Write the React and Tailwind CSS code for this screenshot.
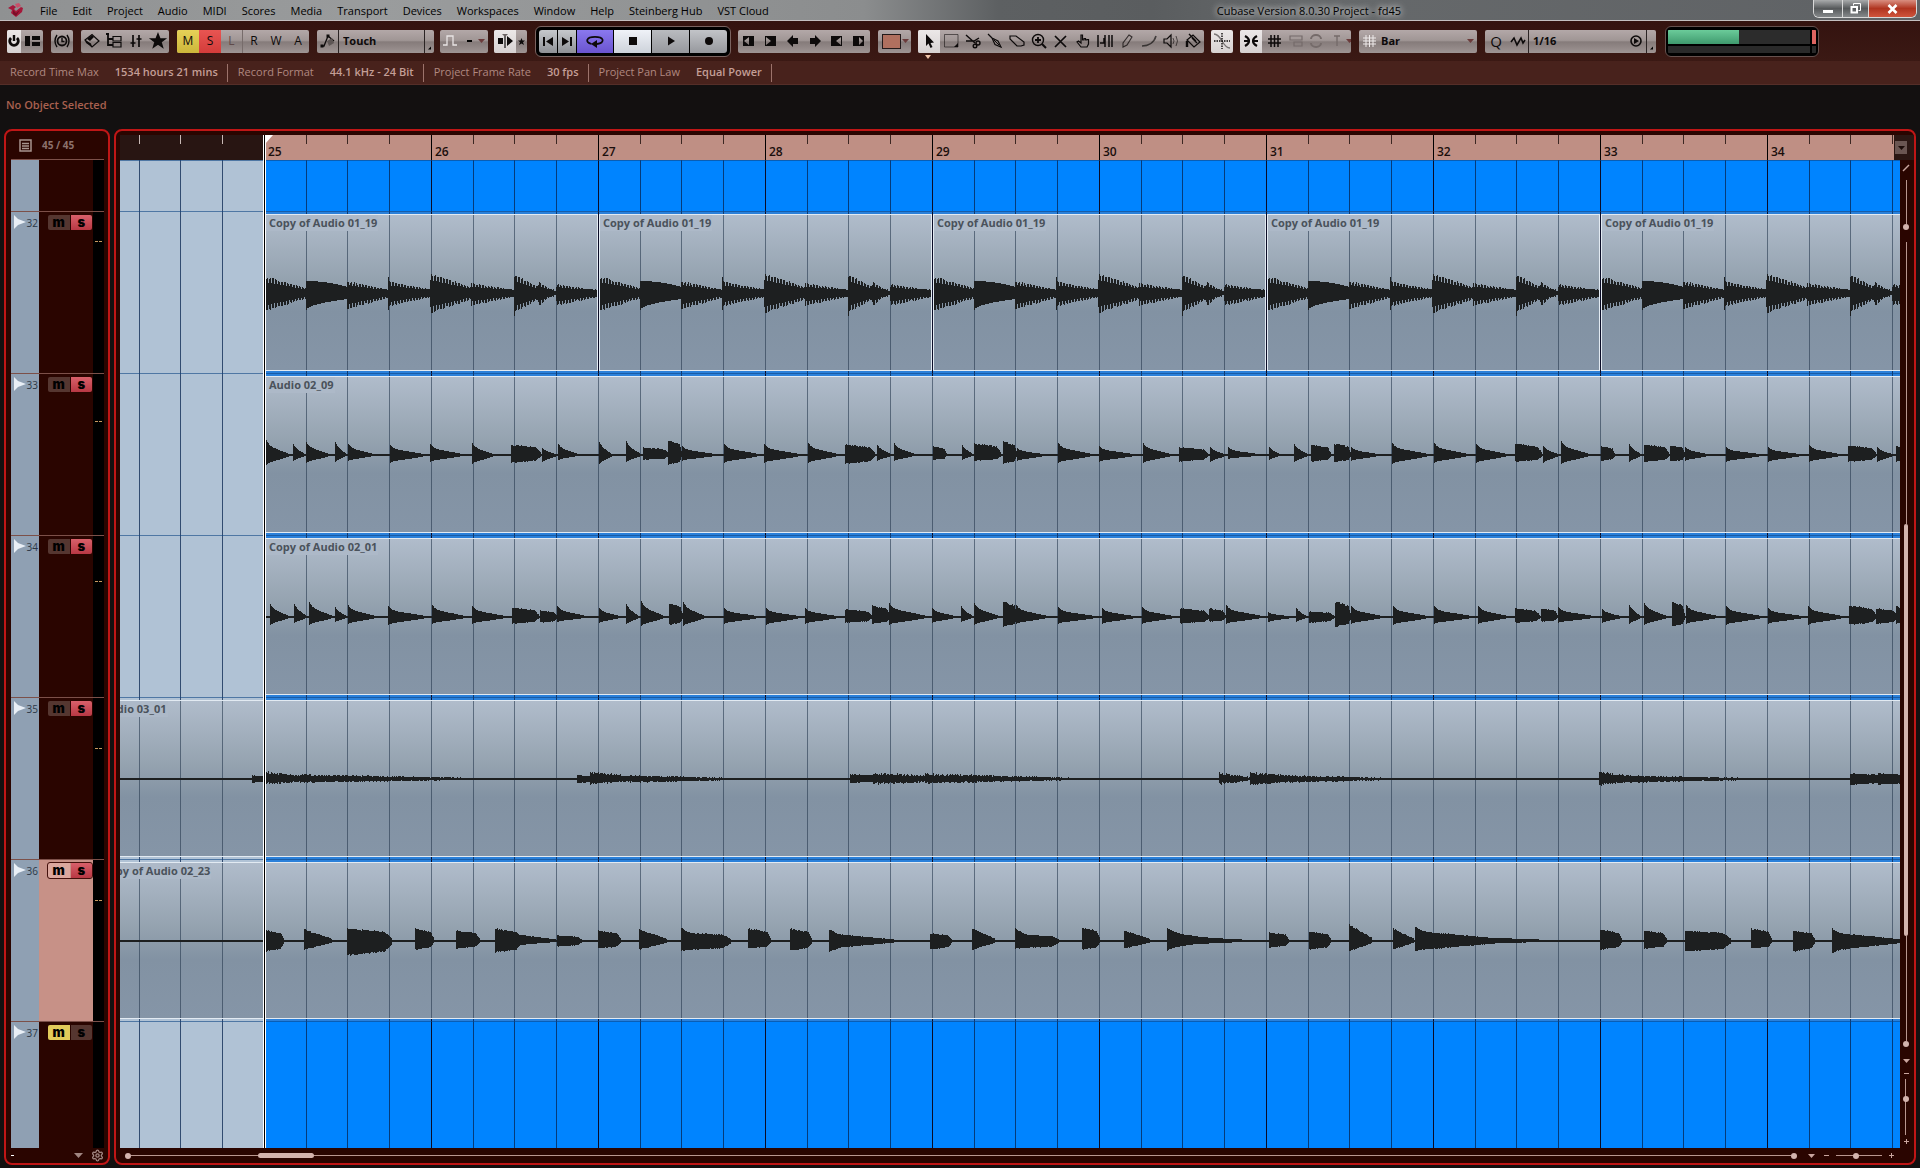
import React, { useMemo, useState } from "react";
import { Settings } from "lucide-react";

const MENUS = [
  "File", "Edit", "Project", "Audio", "MIDI", "Scores", "Media", "Transport",
  "Devices", "Workspaces", "Window", "Help", "Steinberg Hub", "VST Cloud",
];

const INFO = [
  ["Record Time Max", "1534 hours 21 mins"],
  ["Record Format", "44.1 kHz - 24 Bit"],
  ["Project Frame Rate", "30 fps"],
  ["Project Pan Law", "Equal Power"],
];

const BEAT = 41.75;
const FIRST_BEAT = 19;
const LOCATOR = 145;
const LANE_CENTER = 78;
const WAVE_WIDTH = 1780;

const BEATS = Array.from({ length: 43 }, (_, k) => ({
  x: Math.floor(FIRST_BEAT + BEAT * k),
  bar: k % 4 === 3 ? 25 + (k - 3) / 4 : null,
}));

// Hits are [start, end, peak up, peak down, shape].
// p = pluck, b = sustained block, r = ramp down, t = block with a long tail,
// c = comb, s = smooth, n = noise
const LOOP = [
  [0, 40, 17, 19, "c"], [41, 82, 12, 17, "s"], [82, 122, 12, 17, "c"],
  [123, 164, 12, 14, "c"], [123, 126, 17, 17, "r"], [165, 206, 20, 21, "c"], [206, 248, 10, 13, "c"],
  [249, 274, 19, 20, "c"], [249, 254, 17, 23, "r"], [273, 284, 12, 14, "c"], [284, 291, 5, 5, "c"],
  [291, 332, 9, 13, "c"],
];

const KEYS = [
  [266, 291, 15, 10], [293, 306, 11, 6], [306, 332, 13, 8], [335, 347, 13, 7],
  [348, 377, 11, 6], [390, 429, 10, 8], [430, 466, 11, 7], [472, 496, 12, 9],
  [511, 540, 11, 8, "b"], [542, 558, 7, 7], [558, 581, 11, 5], [599, 613, 13, 9],
  [626, 642, 14, 7], [643, 668, 8, 5, "b"], [668, 681, 15, 10, "b"], [682, 720, 9, 6],
  [724, 763, 11, 8], [764, 804, 11, 8], [808, 841, 12, 8], [845, 874, 11, 9, "b"],
  [877, 893, 10, 6], [894, 917, 12, 6], [933, 946, 9, 5, "b"], [962, 974, 10, 5],
  [974, 1000, 12, 6, "b"], [1003, 1016, 14, 9, "b"], [1017, 1049, 7, 6], [1058, 1096, 12, 8],
  [1099, 1139, 9, 7], [1143, 1174, 12, 8], [1179, 1207, 8, 7, "b"], [1210, 1227, 8, 7],
  [1228, 1264, 8, 4], [1269, 1281, 8, 5], [1294, 1309, 11, 7], [1311, 1330, 11, 7, "b"],
  [1334, 1350, 12, 7, "b"], [1351, 1383, 8, 6], [1392, 1432, 12, 9], [1434, 1472, 12, 8],
  [1476, 1511, 11, 8], [1515, 1541, 12, 7, "b"], [1543, 1560, 9, 8], [1561, 1592, 14, 9],
  [1601, 1614, 9, 6, "b"], [1629, 1642, 11, 7], [1644, 1668, 11, 7, "b"], [1670, 1684, 10, 7, "b"],
  [1685, 1712, 8, 6], [1726, 1766, 8, 7], [1768, 1805, 8, 7], [1809, 1844, 10, 7],
  [1848, 1875, 10, 7, "b"], [1877, 1895, 8, 7], [1896, 1902, 10, 7, "b"],
];

const KEYS_COPY = [
  [270, 291, 13, 8], [294, 308, 13, 6], [309, 335, 15, 8], [335, 348, 10, 5],
  [348, 379, 12, 7], [388, 430, 11, 8], [432, 469, 12, 7], [472, 509, 11, 7],
  [512, 538, 10, 7, "b"], [540, 556, 7, 6, "b"], [557, 590, 11, 5], [599, 623, 9, 6],
  [626, 640, 13, 7], [641, 666, 16, 9], [669, 682, 14, 8, "b"], [683, 707, 15, 9],
  [724, 763, 9, 7], [766, 804, 9, 8], [805, 842, 9, 7], [845, 871, 8, 6, "b"],
  [872, 889, 12, 7, "b"], [889, 930, 14, 8], [932, 959, 9, 6], [961, 974, 11, 5],
  [974, 1001, 14, 8], [1003, 1016, 16, 10, "b"], [1016, 1051, 12, 7], [1058, 1100, 10, 7],
  [1102, 1139, 9, 7], [1142, 1178, 10, 7], [1180, 1208, 9, 7, "b"], [1209, 1225, 9, 5, "b"],
  [1226, 1266, 12, 7], [1268, 1296, 5, 5], [1296, 1308, 9, 5], [1309, 1333, 6, 6, "b"],
  [1335, 1350, 16, 10, "b"], [1351, 1386, 11, 7], [1393, 1432, 11, 8], [1434, 1476, 11, 7],
  [1478, 1512, 11, 7], [1515, 1539, 9, 6, "b"], [1541, 1557, 9, 5, "b"], [1558, 1599, 10, 6],
  [1602, 1624, 8, 6], [1629, 1642, 12, 7], [1644, 1669, 14, 8], [1672, 1684, 16, 10, "b"],
  [1686, 1721, 12, 7], [1726, 1766, 11, 8], [1768, 1808, 9, 7], [1808, 1847, 11, 8],
  [1849, 1875, 12, 8, "b"], [1876, 1896, 9, 7, "b"], [1896, 1902, 12, 7, "b"],
];

const PAD = [
  [252, 266, 4, 4, "b"], [264, 320, 8, 6, "n"], [300, 480, 5, 4, "n"], [577, 600, 4, 4, "b"],
  [590, 650, 8, 6, "n"], [630, 745, 4, 4, "n"], [850, 884, 5, 4, "b"], [873, 970, 7, 6, "n"],
  [925, 1075, 6, 5, "n"], [1219, 1252, 7, 6, "n"], [1250, 1310, 8, 7, "n"], [1290, 1400, 4, 4, "n"],
  [1599, 1645, 8, 7, "n"], [1630, 1760, 4, 4, "n"], [1850, 1882, 6, 6, "b"], [1878, 1910, 6, 6, "b"],
];

const BASS = [
  [266, 283, 11, 11, "b"], [304, 331, 12, 9, "r"], [347, 391, 13, 15, "b"], [415, 433, 13, 9, "b"],
  [456, 479, 11, 8, "b"], [495, 520, 13, 12, "b"], [510, 555, 8, 5, "r"], [557, 581, 6, 6, "b"],
  [598, 620, 11, 8, "b"], [639, 666, 12, 9, "r"], [681, 730, 14, 11, "t"], [681, 730, 9, 10, "b"],
  [748, 770, 13, 8, "b"], [790, 811, 13, 10, "b"], [829, 893, 12, 12, "t"], [829, 893, 8, 8, "r"],
  [930, 951, 8, 9, "b"], [972, 994, 13, 9, "r"], [1015, 1058, 13, 8, "t"], [1015, 1058, 7, 8, "b"],
  [1082, 1099, 14, 9, "b"], [1124, 1149, 11, 8, "r"], [1167, 1252, 14, 10, "t"], [1269, 1288, 9, 7, "b"],
  [1309, 1330, 10, 9, "b"], [1349, 1371, 17, 11, "r"], [1393, 1413, 13, 9, "r"], [1415, 1555, 15, 11, "t"],
  [1415, 1500, 11, 10, "r"], [1600, 1621, 12, 9, "b"], [1644, 1666, 11, 8, "b"], [1685, 1730, 11, 11, "b"],
  [1751, 1771, 13, 8, "b"], [1793, 1814, 11, 11, "b"], [1832, 1915, 13, 13, "t"], [1832, 1900, 9, 10, "r"],
];

const inArrange = (hits) => hits.map(([a, b, ...rest]) => [a - 120, b - 120, ...rest]);

const TRACKS = [
  {
    id: 32,
    solo: true,
    peak: 30,
    clips: [0, 1, 2, 3, 4].map((i) => ({ name: "Copy of Audio 01_19", start: LOCATOR + 334 * i, width: 333, hits: LOOP })),
  },
  { id: 33, solo: true, peak: 48, clips: [{ name: "Audio 02_09", start: LOCATOR, hits: inArrange(KEYS) }] },
  { id: 34, solo: true, peak: 46, clips: [{ name: "Copy of Audio 02_01", start: LOCATOR, hits: inArrange(KEYS_COPY) }] },
  { id: 35, solo: true, peak: 51, clips: [{ name: "Audio 03_01", start: -22, hits: inArrange(PAD) }] },
  { id: 36, solo: true, peak: 41, selected: true, clips: [{ name: "Copy of Audio 02_23", start: -22, hits: inArrange(BASS) }] },
];

function noise(n) {
  const v = Math.sin(n * 12.9898) * 43758.5453;
  return v - Math.floor(v);
}

function amplitude(shape, t, d, peak, x, side) {
  const j = noise(x * 2 + side);
  switch (shape) {
    case "b":
      return peak * (1 - 0.3 * t) * (t > 0.85 ? 1 - (t - 0.85) * 4 : 1) * (0.88 + 0.12 * j);
    case "r":
      return peak * (1 - 0.78 * t) * (0.88 + 0.12 * j);
    case "t":
      return peak * (0.42 * (1 - 0.85 * t) + 0.58 * Math.exp(-d / 12)) * (0.9 + 0.1 * j);
    case "s":
      return side ? peak * (1 - 0.65 * Math.sqrt(t)) : peak * (1 - 0.5 * t * t);
    case "c": {
      const env = peak * (1 - 0.68 * t);
      return x % 3 === 0 ? Math.max(4, env * 0.65) : env * (0.85 + 0.15 * j);
    }
    case "n":
      return peak * (1 - 0.75 * t) * (0.6 + 0.4 * j);
    default:
      return side
        ? peak * (0.82 * (1 - t) ** 0.8 + 0.18 * Math.exp(-d / 2))
        : peak * (0.62 * (1 - t) ** 0.9 + 0.38 * Math.exp(-d / 3));
  }
}

function wavePath(hits, from, to) {
  const up = [];
  const down = [];
  for (let x = from; x < to; x++) {
    let a = 1;
    let b = 1;
    hits.forEach(([x0, x1, pu, pd, shape = "p"]) => {
      if (x < x0 || x > x1) return;
      const t = (x - x0) / (x1 - x0);
      a = Math.max(a, amplitude(shape, t, x - x0, pu, x, 0));
      b = Math.max(b, amplitude(shape, t, x - x0, pd, x, 1));
    });
    up.push(`L${x} ${LANE_CENTER - Math.round(a)}H${x + 1}`);
    down.push(`L${x + 1} ${LANE_CENTER + Math.round(b)}H${x}`);
  }
  return `M${from} ${LANE_CENTER}${up.join("")}${down.reverse().join("")}Z`;
}

function GridLines({ beatClass, barClass }) {
  return (
    <svg className="absolute inset-0 h-full w-full" shapeRendering="crispEdges" aria-hidden="true">
      {BEATS.map(({ x, bar }) => (
        <rect key={x} x={x} y="0" width="1" height="100%" className={bar ? barClass : beatClass} />
      ))}
    </svg>
  );
}

function Clip({ clip }) {
  const path = useMemo(
    () => wavePath(clip.hits, clip.width ? 0 : Math.max(clip.start, 0), clip.width || WAVE_WIDTH),
    [clip]
  );
  const shift = clip.width ? 0 : -clip.start;

  return (
    <div
      className="absolute top-[3px] h-[157px] overflow-hidden border-y border-l border-[#e2eaf2] bg-[linear-gradient(#b0bccb,#94a2af_42%,#8292a3_62%,#8595a7)]"
      style={{ left: clip.start, width: clip.width, right: clip.width ? undefined : 0, borderRightWidth: clip.width ? 1 : 0 }}
    >
      <svg className="absolute top-0 h-full" style={{ left: shift - 1, width: WAVE_WIDTH }} aria-hidden="true">
        <g shapeRendering="crispEdges">
          {BEATS.map(({ x }) => {
            const at = clip.width ? x - clip.start : x;
            return <rect key={x} x={at} y="0" width="1" height="100%" className="fill-[#26394e]/60" />;
          })}
        </g>
        <path d={path} className="fill-[#1d1f20]" />
      </svg>
      <span className="relative block w-fit bg-[#adb9c8] pr-px pl-[3px] text-[11px] leading-4 font-bold text-[#4a525b]">
        {clip.name}
      </span>
    </div>
  );
}

function Lane({ track, className }) {
  return (
    <div
      className={`relative overflow-hidden ${
        track
          ? "bg-[linear-gradient(90deg,#b0c2d5_145px,#2a80da_145px)]"
          : "bg-[linear-gradient(90deg,#b0c2d5_145px,#0084ff_145px)]"
      } ${className}`}
    >
      <GridLines beatClass="fill-[#07234d]/75" barClass="fill-[#0a0c26]" />
      <div className="absolute inset-x-0 top-0 h-px bg-[#0f4484]/60" />
      {track?.clips.map((clip) => <Clip key={clip.start} clip={clip} />)}
    </div>
  );
}

function TrackHeader({ id, mute, solo, selected, peak, className }) {
  return (
    <div className={`flex border-t border-[#7c5049] ${className}`}>
      <div className="flex w-7 justify-between bg-[#8fa0b3] pt-[3px] pr-px pl-[3px]">
        <svg width="12" height="14" viewBox="0 0 12 14" className="shrink-0 fill-[#e9eff6]" aria-hidden="true">
          <path d="M0 0L4 4L12 7L4 10L0 14Z" />
        </svg>
        <span className="text-[10px] leading-4 text-[#2c3846]">{id}</span>
      </div>
      <div className={`flex-1 pt-[3px] pl-[9px] ${selected ? "bg-[#c79187]" : "bg-[#2a0500]"}`}>
        <div className={`flex w-[44px] gap-px rounded-xs ${selected ? "outline outline-[#43100c]" : ""}`}>
          <button
            type="button"
            aria-label={`Mute track ${id}`}
            className={`h-[15px] flex-1 rounded-l-xs font-[Inter] text-[13px] leading-[13px] font-black text-black ${
              mute ? "bg-[#e2cb5a]" : selected ? "bg-[#dba79e]" : "bg-[#553630]"
            }`}
          >
            m
          </button>
          <button
            type="button"
            aria-label={`Solo track ${id}`}
            className={`h-[15px] flex-1 rounded-r-xs font-[Inter] text-[13px] leading-[13px] font-black text-black ${
              solo ? "bg-[linear-gradient(#d8606a,#b83844)]" : "bg-[#553630]"
            }`}
          >
            s
          </button>
        </div>
      </div>
      <div className="w-[11px] bg-black">
        {peak && (
          <div className="flex justify-center gap-px" style={{ paddingTop: peak - 1 }}>
            <span className="h-px w-[3px] bg-[#c99a60]" />
            <span className="h-px w-[3px] bg-[#c99a60]" />
          </div>
        )}
      </div>
    </div>
  );
}

function Ico({ children, className = "" }) {
  return (
    <svg
      viewBox="0 0 20 20"
      className={`h-5 w-5 shrink-0 ${className}`}
      fill="none"
      stroke="currentColor"
      strokeWidth="1.4"
      aria-hidden="true"
    >
      {children}
    </svg>
  );
}

const FACE = "bg-[linear-gradient(#b3a8a8,#a09695_45%,#857b7a_52%,#9f9594)]";
const FACE_LIT = "bg-[linear-gradient(#ece8e8,#d6d1d1)]";

function Group({ children, className = "" }) {
  return <div className={`flex h-[23px] shrink-0 overflow-hidden rounded-xs ${FACE} ${className}`}>{children}</div>;
}

function Tool({ label, lit, width = "w-[22px]", className = "", children }) {
  return (
    <button
      type="button"
      aria-label={label}
      className={`flex h-full shrink-0 items-center justify-center text-[#0d0a0a] ${width} ${lit ? FACE_LIT : ""} ${className}`}
    >
      {children}
    </button>
  );
}

function Drop({ label, value, className = "" }) {
  return (
    <select
      aria-label={label}
      defaultValue={value}
      className={`h-full min-w-0 flex-1 appearance-none bg-transparent pl-1 text-[11px] font-bold text-[#0d0a0a] outline-none ${className}`}
    >
      <option>{value}</option>
    </select>
  );
}

function Caret({ className = "text-[#6b3b3b]" }) {
  return (
    <svg width="7" height="4" viewBox="0 0 7 4" className={`shrink-0 fill-current ${className}`} aria-hidden="true">
      <path d="M0 0H7L3.500 4Z" />
    </svg>
  );
}

function Corner() {
  return (
    <div className="flex w-[10px] items-end justify-end border-l border-[#2b2424] p-[3px]">
      <svg width="4" height="4" viewBox="0 0 4 4" aria-hidden="true"><path d="M4 0V4H0Z" /></svg>
    </div>
  );
}

function TitleBar() {
  return (
    <header className="flex h-[21px] items-center border-b border-[#c4c0c0] bg-[linear-gradient(90deg,#8f9192,#9a9c9d_20%,#8b8d8e_45%,#5d6062_52%,#5a5d5f_60%,#66696b_68%,#5f6265)]">
      <svg width="18" height="16" viewBox="0 0 18 16" className="ml-[7px]" aria-hidden="true">
        <path d="M1 6L6 3L9 5L7 7L9 9L14 5L16 6L15 10L9 15L4 11L5 8Z" fill="#a5183a" />
        <path d="M8 2L12 1L14 4L10 6Z" fill="#c8506a" />
        <path d="M6 8L9 11L13 8L9 14L6 12Z" fill="#7a0f28" />
      </svg>
      <nav className="flex gap-[15px] pt-px pl-[15px] text-[11px] leading-4 text-black [text-shadow:0_0_5px_#ffffffaa]">
        {MENUS.map((m) => (
          <button key={m} type="button">{m}</button>
        ))}
      </nav>
      <h1 className="flex-1 pt-px pl-9 text-center text-[11px] leading-4 text-black [text-shadow:0_0_6px_#fff,0_0_8px_#ffffff99]">
        Cubase Version 8.0.30 Project - fd45
      </h1>
      <div className="mr-[3px] flex h-[18px] self-start overflow-hidden rounded-b-md border border-t-0 border-[#d9d9d9] text-white">
        <button type="button" aria-label="Minimize" className="flex w-7 items-end justify-center bg-[linear-gradient(#a9abac,#56595b_50%,#85888a)] pb-1">
          <span className="h-[3px] w-[10px] bg-white" />
        </button>
        <button type="button" aria-label="Restore" className="flex w-[27px] items-center justify-center border-x border-[#d9d9d9] bg-[linear-gradient(#a9abac,#56595b_50%,#85888a)]">
          <svg width="11" height="11" viewBox="0 0 11 11" fill="none" stroke="currentColor" aria-hidden="true">
            <path d="M3.500 2.500V.5H10.500V7.500H8.500" />
            <path d="M1.500 4H7V9.500H1.500Z" strokeWidth="2" />
          </svg>
        </button>
        <button type="button" aria-label="Close" className="flex w-[47px] items-center justify-center bg-[linear-gradient(#d98e80,#b03420_50%,#d0543c)]">
          <svg width="11" height="10" viewBox="0 0 11 10" stroke="currentColor" strokeWidth="2.600" aria-hidden="true">
            <path d="M1.500 1L9.500 9M9.500 1L1.500 9" />
          </svg>
        </button>
      </div>
    </header>
  );
}

const AUTOMATION = [
  ["M", "bg-[linear-gradient(#e6d158,#cdb63a)]"],
  ["S", "bg-[linear-gradient(#e85552,#d33c3a)]"],
  ["L", "text-[#5f4a4a] border-r border-r-[#776c6b]"],
  ["R", ""],
  ["W", ""],
  ["A", ""],
];

function Transport() {
  return (
    <div className="ml-2 rounded-md border border-[#7a6360] bg-black p-[2px]">
      <div className="flex h-[25px] gap-px overflow-hidden rounded-sm border border-black text-[#23272b]">
        <Tool label="Previous marker" width="w-[18px]" className="bg-[linear-gradient(#c6c8cc,#8f9196)]">
          <svg width="10" height="9" viewBox="0 0 10 9" className="fill-current" aria-hidden="true"><path d="M0 0H2V9H0ZM10 0V9L3 4.500Z" /></svg>
        </Tool>
        <Tool label="Next marker" width="w-[18px]" className="bg-[linear-gradient(#c6c8cc,#8f9196)]">
          <svg width="10" height="9" viewBox="0 0 10 9" className="fill-current" aria-hidden="true"><path d="M8 0H10V9H8ZM0 0V9L7 4.500Z" /></svg>
        </Tool>
        <Tool label="Cycle" width="w-9" className="bg-[linear-gradient(#8a78ef,#6a54cf)]">
          <Ico>
            <path d="M6.500 13C3 12 1.500 10.500 2.500 8.500C4 5 16 5 17.500 8.500C18.500 11 16 12.500 12 13" strokeWidth="1.800" />
            <path d="M6 13L12 9V17Z" fill="currentColor" stroke="none" />
          </Ico>
        </Tool>
        <Tool label="Stop" width="w-[37px]" className="bg-[linear-gradient(#eff2f8,#cdd2da)]">
          <span className="h-2 w-2 bg-current" />
        </Tool>
        <Tool label="Play" width="w-[37px]" className="bg-[linear-gradient(#b9bbbf,#96989d)]">
          <Ico><path d="M7 5.500V14.500L14 10Z" fill="currentColor" stroke="none" /></Ico>
        </Tool>
        <Tool label="Record" width="w-[37px]" className="bg-[linear-gradient(#c2c4c8,#96989d)]">
          <span className="h-2 w-2 rounded-full bg-current" />
        </Tool>
      </div>
    </div>
  );
}

const NUDGES = [
  ["Trim start left", <path key="a" d="M4 5H15V15H4ZM10 6L5 10L10 14Z" fillRule="evenodd" />],
  ["Trim start right", <path key="b" d="M4 5H15V15H4ZM5 6L10 10L5 14Z" fillRule="evenodd" />],
  ["Move left", <path key="c" d="M4 10L10 4V7H15V13H10V16Z" />],
  ["Move right", <path key="d" d="M16 10L10 4V7H5V13H10V16Z" />],
  ["Trim end left", <path key="e" d="M4 5H15V15H4ZM14 6L9 10L14 14Z" fillRule="evenodd" />],
  ["Trim end right", <path key="f" d="M4 5H15V15H4ZM10 6L14 10L10 14Z" fillRule="evenodd" />],
];

const TOOLS = [
  ["Object selection", <path key="a" d="M7 3V15L9.500 12.500L11.500 17L13.500 16L11.500 12L15 11.500Z" fill="currentColor" stroke="none" />],
  ["Range selection", <g key="b"><path d="M3.500 3.500H17V16H3.500Z" strokeWidth="1" opacity=".55" /><path d="M17 12V16H13Z" fill="currentColor" stroke="none" /></g>],
  ["Split", <g key="c"><path d="M3 4L12 12M3 10H11L16 7" /><circle cx="15" cy="12" r="2" /><circle cx="12" cy="15" r="1.800" /></g>],
  ["Glue", <g key="d"><path d="M3 3L7 7M7 7L13 10L16 16L10 13.500Z" strokeWidth="1.200" /><path d="M9 9L14 14" strokeWidth="1" /></g>],
  ["Erase", <path key="e" d="M3 8L3 5H9L17 11V14L14 15H10Z" strokeWidth="1.200" />],
  ["Zoom", <g key="f"><circle cx="9" cy="9" r="5.500" /><path d="M13 13L17 17" strokeWidth="2" /><path d="M9 6V12M6 9H12" strokeWidth="1.800" /></g>],
  ["Mute", <path key="g" d="M4 5L15 16M15 5L4 16" strokeWidth="1.700" />],
  ["Comp", <path key="h" d="M8 16L4 11L5.500 10L8 12V4H9.500V9H11V7.500H12.500V9H14V8.500H15.500V13L14 16Z" strokeWidth="1.200" />],
  ["Time warp", <path key="i" d="M3 4V16M5 12H9V7M10 16V4M14 4V16M17 4V16" strokeWidth="1.500" />],
  ["Draw", <path key="j" d="M6 16V12L12 4L15 6L10 14Z" strokeWidth="1.100" opacity=".75" />],
  ["Line", <path key="k" d="M3 15C9 15 15 12 17 5" strokeWidth="1.600" opacity=".65" />],
  ["Play", <g key="l"><path d="M3 8H6L10 4V16L6 12H3Z" strokeWidth="1.200" /><path d="M12 7Q14 10 12 13M15 5Q18 10 15 15" strokeWidth="1" opacity=".6" /></g>],
  ["Color", <g key="m"><path d="M4 9L10 4L17 11L11 16Z" strokeWidth="1.200" /><path d="M6 3L13 10M9 7L14 12" /><path d="M4 10V16" strokeWidth="2.400" /></g>],
];

function Toolbar() {
  const [tool, setTool] = useState("Object selection");

  return (
    <div className="flex h-10 items-center bg-[linear-gradient(#34130f,#3b1914)] pl-[7px]">
      <Group>
        <Tool label="Activate project" lit width="w-[14px]">
          <Ico><path d="M7 7A4.300 4.300 0 1 0 13 7" strokeWidth="2.800" /><path d="M10 4V10" strokeWidth="2.400" /></Ico>
        </Tool>
        <Tool label="Window layout">
          <Ico><path d="M3 5H8V15H3ZM10 5H18V9H10ZM10 11H18V15H10Z" fill="currentColor" stroke="none" /></Ico>
        </Tool>
      </Group>
      <Group className="ml-2">
        <Tool label="Constrain delay compensation">
          <Ico>
            <circle cx="10" cy="10" r="4.500" strokeWidth="1.800" />
            <path d="M10 7V10.500H12.500M5 4Q1 10 5 16M15 4Q19 10 15 16" />
          </Ico>
        </Tool>
      </Group>
      <Group className="ml-2">
        <Tool label="Open media pool">
          <Ico><path d="M3 9L10 3.500L17 10L10 16Z" strokeWidth="1.200" /><path d="M3 9L9 12.500L10 16L4 12ZM5 8L10 4L12 6L8 10Z" fill="currentColor" stroke="none" /></Ico>
        </Tool>
        <Tool label="Track list view">
          <Ico><path d="M2 3H5M4 3V14H9M4 8H9" strokeWidth="1.800" /><path d="M9 5.500H17V10H9ZM9 11.500H17V16H9Z" strokeWidth="1.200" /></Ico>
        </Tool>
        <Tool label="Mixer">
          <Ico><path d="M7 4V16M13 4V16M4.500 12H9.500M10.500 8H15.500" strokeWidth="1.700" /></Ico>
        </Tool>
        <Tool label="Favourites">
          <Ico><path d="M10 3L12 8H17L13 11L14.500 16L10 13L5.500 16L7 11L3 8H8Z" fill="currentColor" /></Ico>
        </Tool>
      </Group>
      <Group className="ml-2">
        {AUTOMATION.map(([letter, cls]) => (
          <Tool key={letter} label={letter} className={`text-[12px] ${cls}`}>{letter}</Tool>
        ))}
      </Group>
      <Group className="ml-2 w-[117px]">
        <Tool label="Automation panel" className="border-r border-[#2b2424]">
          <Ico><path d="M3 15H6L10 5L16 10" strokeWidth="1.300" /><path d="M9 10L14 7L16 12L11 15Z" fill="#5e5655" stroke="none" /><path d="M8.500 3.500H11.500V6.500H8.500ZM2.500 13.500H5.500V16.500H2.500Z" fill="currentColor" stroke="none" /></Ico>
        </Tool>
        <Drop label="Automation mode" value="Touch" />
        <Corner />
      </Group>
      <Group className="ml-[6px] w-12 items-center justify-between pr-[3px] pl-[1px]">
        <Ico className="text-[#e8e4e4]"><path d="M2 14H6V5H12V14H16" strokeWidth="1.300" /></Ico>
        <span className="h-[2px] w-[5px] bg-black" />
        <Caret />
      </Group>
      <Group className="ml-[6px]">
        <Tool label="Auto-scroll" lit>
          <Ico><path d="M3 7H8V13H3ZM12 8V5L18 10L12 15V12Z" fill="currentColor" stroke="none" /><path d="M10 4V17" strokeWidth="1.200" /><path d="M7 3H13L10 6Z" fill="#6b6464" stroke="none" /></Ico>
        </Tool>
        <Tool label="Suspend auto-scroll" width="w-[11px]">
          <svg width="7" height="7" viewBox="0 0 7 7" className="fill-current" aria-hidden="true"><path d="M3.500 0L4.500 2.500H7L5 4.200L6 7L3.500 5.500L1 7L2 4.200L0 2.500H2.500Z" /></svg>
        </Tool>
      </Group>
      <Transport />
      <Group className="ml-[7px]">
        {NUDGES.map(([label, shape]) => (
          <Tool key={label} label={label}>
            <Ico><g fill="currentColor" stroke="none">{shape}</g></Ico>
          </Tool>
        ))}
      </Group>
      <Group className="ml-2 w-[33px] items-center justify-between pr-[2px] pl-1">
        <span className="h-[15px] w-[19px] border border-[#231a1a] bg-[#b0705f]" />
        <Caret />
      </Group>
      <div className="relative ml-[7px]">
        <Group>
          {TOOLS.map(([label, shape]) => (
            <button
              key={label}
              type="button"
              aria-label={label}
              onClick={() => setTool(label)}
              className={`flex h-full w-[22px] items-center justify-center text-[#0d0a0a] ${tool === label ? FACE_LIT : ""}`}
            >
              <Ico>{shape}</Ico>
            </button>
          ))}
        </Group>
        <svg width="6" height="4" viewBox="0 0 6 4" className="absolute top-[25px] left-[7px] fill-[#f0c4a8]" aria-hidden="true">
          <path d="M0 0H6L3 4Z" />
        </svg>
      </div>
      <Group className="ml-[7px]">
        <Tool label="Snap to zero crossing" lit>
          <Ico><path d="M2 3C10 3 10 17 18 17" opacity=".5" /><path d="M2 10H18M10 2V18" strokeDasharray="1.500 1" /></Ico>
        </Tool>
      </Group>
      <Group className="ml-[7px] w-[111px] items-center pr-[3px]">
        <Tool label="Snap" lit>
          <Ico><path d="M4 5Q8 7 8 10Q8 13 4 15M16 5Q12 7 12 10Q12 13 16 15" strokeWidth="2.200" /><path d="M3 10H8M12 10H17" strokeWidth="1.800" /></Ico>
        </Tool>
        <Tool label="Snap to grid" width="w-6">
          <Ico><path d="M7 4V16M10.500 4V16M14 4V16M4 8H17M4 12H17" strokeWidth="1.500" /></Ico>
        </Tool>
        <Ico className="text-[#756b6a]"><path d="M4 5H16V9H4ZM8 11H16V15H8Z" strokeWidth="1.200" /></Ico>
        <Ico className="text-[#756b6a]"><path d="M5 8A5 4 0 0 1 15 8M15 12A5 4 0 0 1 5 12" strokeWidth="2" /></Ico>
        <Ico className="text-[#756b6a]"><path d="M8 5H14M11 5V15" strokeWidth="1.400" /></Ico>
        <Caret />
      </Group>
      <Group className="ml-2 w-[118px] items-center pr-[3px]">
        <Ico className="text-[#eeeaea]"><path d="M7 4V16M10.500 4V16M14 4V16M4 7H17M4 10H17M4 13H17" strokeWidth="1" /></Ico>
        <Drop label="Grid type" value="Bar" className="pl-[2px]" />
        <Caret />
      </Group>
      <Group className="ml-2 w-[171px] items-center">
        <Tool label="Apply quantize" className="text-[15px]">Q</Tool>
        <Tool label="Soft quantize" className="border-r border-[#2b2424]">
          <Ico><path d="M3 11L6 7L9 14L13 7L15 12L17 9" strokeWidth="1.600" /></Ico>
        </Tool>
        <Drop label="Quantize preset" value="1/16" />
        <Tool label="Open quantize panel" width="w-5">
          <Ico><circle cx="10" cy="10" r="5" strokeWidth="1.600" /><path d="M8 7V13L13 10Z" fill="currentColor" stroke="none" /></Ico>
        </Tool>
        <div className="flex h-full"><Corner /></div>
      </Group>
      <div className="ml-[9px] rounded-md border border-[#66514e] bg-black p-[2px]" role="img" aria-label="Audio performance">
        <div className="flex h-[25px] w-[148px] gap-[2px] overflow-hidden rounded-xs py-px">
          <div className="flex flex-1 flex-col gap-[2px]">
            <div className="h-[14px] bg-[#2c2c2c]"><div className="h-full w-1/2 bg-[linear-gradient(#6bcb9a,#3f9a6e)]" /></div>
            <div className="flex-1 bg-[#2a2a2a]" />
          </div>
          <div className="flex w-1 flex-col gap-[2px]">
            <div className="h-[14px] bg-[#dd6460]" />
            <div className="flex-1 bg-[#2a2a2a]" />
          </div>
        </div>
      </div>
    </div>
  );
}

function InfoBar() {
  return (
    <div className="flex h-6 items-center border-b border-[#552e28] bg-[#48221c] text-[11px] text-[#b08880]">
      {INFO.map(([label, value]) => (
        <div key={label} className="flex h-[18px] items-center gap-4 border-r border-[#9c736b] pr-[9px] pl-[10px]">
          <span>{label}</span>
          <span className="font-semibold text-[#c49e96]">{value}</span>
        </div>
      ))}
    </div>
  );
}

function Ruler() {
  return (
    <div className="flex h-[25px]">
      <div className="relative min-w-0 flex-1 overflow-hidden bg-[linear-gradient(90deg,#281512_145px,#bf8f84_145px)]">
        {BEATS.map(({ x, bar }) =>
          bar ? (
            <div key={x} className="absolute top-0 flex h-full items-end border-l border-black pl-[3px] text-[12px] leading-[17px] font-semibold text-[#1a0e0c]" style={{ left: x }}>
              {bar}
            </div>
          ) : (
            <div key={x} className={`absolute top-0 h-[9px] w-px ${x < LOCATOR ? "bg-[#c9b9b5]" : "bg-[#3c2722]"}`} style={{ left: x }} />
          )
        )}
        <svg width="8" height="9" viewBox="0 0 8 9" className="absolute top-0 left-[145px] fill-white" aria-hidden="true"><path d="M0 0H8L0 9Z" /></svg>
      </div>
      <div className="w-5 bg-[#2b1713] pt-[6px] pl-px">
        <button type="button" aria-label="Ruler format" className="flex h-[13px] w-3 items-center justify-center bg-[#6a5652]">
          <Caret className="text-[#1d0d0a]" />
        </button>
      </div>
    </div>
  );
}

const RANGE =
  "shrink-0 appearance-none bg-transparent [&::-webkit-slider-thumb]:appearance-none [&::-webkit-slider-thumb]:h-[6px] [&::-webkit-slider-thumb]:w-[6px] [&::-webkit-slider-thumb]:rounded-full [&::-webkit-slider-thumb]:bg-[#d3b3ad]";

function Dot() {
  return <span className="h-[6px] w-[6px] shrink-0 rounded-full bg-[#d3b3ad]" />;
}

function VerticalRail() {
  return (
    <div className="flex w-3 flex-col items-center text-[#c9a59e]">
      <svg width="8" height="8" viewBox="0 0 8 8" stroke="currentColor" strokeWidth="1.500" className="mt-1" aria-hidden="true"><path d="M1 7L7 1" /></svg>
      <div className="mt-2 h-11 w-px bg-[#b9968f]" />
      <Dot />
      <div className="mt-3"><Dot /></div>
      <div className="flex w-full flex-1 flex-col items-center">
        <div className="w-px flex-[35] bg-[#b9968f]" />
        <div className="w-1 flex-[51] rounded-full bg-[#d3b3ad]" />
        <div className="w-px flex-[13] bg-[#b9968f]" />
      </div>
      <Dot />
      <Caret className="mt-3 text-[#c9a59e]" />
      <span className="mt-[10px] h-px w-[5px] shrink-0 bg-[#c9a59e]" />
      <input
        type="range"
        aria-label="Vertical zoom"
        defaultValue="66"
        className={`mt-[5px] mb-1 h-14 w-[6px] [writing-mode:vertical-lr] [direction:rtl] bg-[linear-gradient(90deg,transparent_2px,#b9968f_2px,#b9968f_3px,transparent_3px)]! ${RANGE}`}
      />
      <svg width="5" height="5" viewBox="0 0 5 5" className="mb-1 shrink-0 fill-current" aria-hidden="true"><path d="M2 0H3V2H5V3H3V5H2V3H0V2H2Z" /></svg>
    </div>
  );
}

function BottomRail() {
  return (
    <div className="flex h-[15px] items-center pr-5 pl-[5px] text-[#c9a59e]">
      <Dot />
      <div className="flex flex-1 items-center">
        <div className="h-px w-[127px] bg-[#b9968f]" />
        <div className="h-[5px] w-14 rounded-full bg-[#d3b3ad]" />
        <div className="h-px flex-1 bg-[#b9968f]" />
      </div>
      <Dot />
      <Caret className="ml-[11px] text-[#c9a59e]" />
      <span className="ml-[9px] h-px w-[5px] bg-[#c9a59e]" />
      <input
        type="range"
        aria-label="Horizontal zoom"
        defaultValue="43"
        className={`mx-[7px] h-[6px] w-[46px] bg-[linear-gradient(transparent_2px,#b9968f_2px,#b9968f_3px,transparent_3px)]! ${RANGE}`}
      />
      <svg width="5" height="5" viewBox="0 0 5 5" className="fill-current" aria-hidden="true"><path d="M2 0H3V2H5V3H3V5H2V3H0V2H2Z" /></svg>
    </div>
  );
}

function TrackList() {
  return (
    <aside className="flex w-[106px] shrink-0 flex-col rounded-lg border-2 border-[#c01616] bg-[#2a0500] pt-1 pr-1 pl-[5px]">
      <div className="flex h-6 items-center gap-[10px] pb-[3px] pl-2 text-[10px] font-bold text-[#8d726d]">
        <svg width="13" height="13" viewBox="0 0 13 13" fill="none" stroke="#a8948f" strokeWidth="1.500" aria-hidden="true">
          <path d="M1 1H12V12H1ZM3 4.500H10M3 7H10M3 9.500H10" />
        </svg>
        45 / 45
      </div>
      <div className="flex flex-1 flex-col">
        <div className="flex h-[52px] border-t border-[#7c5049]">
          <div className="w-7 bg-[#8fa0b3]" />
          <div className="flex-1" />
          <div className="w-[11px] bg-black" />
        </div>
        {TRACKS.map((t) => (
          <TrackHeader key={t.id} {...t} className="h-[162px]" />
        ))}
        <TrackHeader id={37} mute className="flex-1" />
      </div>
      <div className="flex h-[15px] items-center text-[#a08681]">
        <span className="h-px w-[3px] bg-white" />
        <svg width="9" height="5" viewBox="0 0 9 5" className="mr-[8px] ml-auto fill-current" aria-hidden="true"><path d="M0 0H9L4.500 5Z" /></svg>
        <Settings size={13} strokeWidth={2.5} />
      </div>
    </aside>
  );
}

function Arrange() {
  return (
    <main className="flex min-w-0 flex-1 flex-col rounded-lg border-2 border-[#c01616] bg-[#2a0500] pt-1 pl-1">
      <div className="relative flex min-w-0 flex-1 flex-col">
        <Ruler />
        <div className="flex flex-1">
          <div className="flex min-w-0 flex-1 flex-col">
            <Lane className="h-[51px]" />
            {TRACKS.map((t) => (
              <Lane key={t.id} track={t} className="h-[162px]" />
            ))}
            <Lane className="flex-1" />
          </div>
          <VerticalRail />
          <div className="w-[2px]" />
        </div>
        <div className="absolute inset-y-0 left-[143px] w-[3px] border-x border-white bg-black" />
      </div>
      <BottomRail />
    </main>
  );
}

export default function App() {
  return (
    <div className="flex min-h-screen flex-col overflow-hidden bg-[#131010] font-['Open_Sans','Noto_Sans',sans-serif]">
      <TitleBar />
      <Toolbar />
      <InfoBar />
      <div className="flex h-11 items-center pb-1 pl-[6px] text-[11px] font-semibold text-[#a8604f]">No Object Selected</div>
      <div className="flex flex-1 gap-1 px-1 pb-[3px]">
        <TrackList />
        <Arrange />
      </div>
    </div>
  );
}
